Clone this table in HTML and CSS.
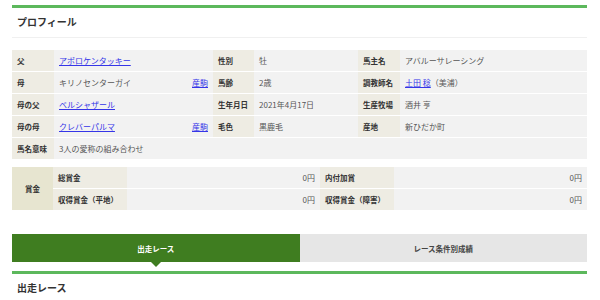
FILE: index.html
```html
<!DOCTYPE html>
<html lang="ja">
<head>
<meta charset="utf-8">
<link rel="stylesheet" href="styles.css">
</head>
<body>
<div class="wrap">
  <section class="section">
    <h2 class="sec-title">プロフィール</h2>
    <div class="prof">
      <div class="lb">父</div><div class="vl"><a href="#">アポロケンタッキー</a></div>
      <div class="lb">性別</div><div class="vl">牡</div>
      <div class="lb">馬主名</div><div class="vl">アバルーサレーシング</div>

      <div class="lb">母</div><div class="vl split"><span>キリノセンターガイ</span><a href="#">産駒</a></div>
      <div class="lb">馬齢</div><div class="vl">2歳</div>
      <div class="lb">調教師名</div><div class="vl"><a href="#">土田 稔</a>（美浦）</div>

      <div class="lb">母の父</div><div class="vl"><a href="#">ベルシャザール</a></div>
      <div class="lb">生年月日</div><div class="vl">2021年4月17日</div>
      <div class="lb">生産牧場</div><div class="vl">酒井 亨</div>

      <div class="lb">母の母</div><div class="vl split"><a href="#">クレバーパルマ</a><a href="#">産駒</a></div>
      <div class="lb">毛色</div><div class="vl">黒鹿毛</div>
      <div class="lb">産地</div><div class="vl">新ひだか町</div>

      <div class="lb">馬名意味</div><div class="vl full">3人の愛称の組み合わせ</div>
    </div>

    <div class="prize">
      <div class="pz-head">賞金</div>
      <div class="lb">総賞金</div><div class="vl num">0円</div>
      <div class="lb">内付加賞</div><div class="vl num">0円</div>
      <div class="lb">収得賞金（平地）</div><div class="vl num">0円</div>
      <div class="lb">収得賞金（障害）</div><div class="vl num">0円</div>
    </div>
  </section>

  <nav class="tabs">
    <div class="tab active">出走レース</div>
    <div class="tab">レース条件別成績</div>
  </nav>

  <section class="section section2">
    <h2 class="sec-title">出走レース</h2>
  </section>
</div>
</body>
</html>
```
FILE: styles.css
```css
* { box-sizing: border-box; }
html, body { margin: 0; padding: 0; background: #fff; }
body {
  font-family: "Noto Sans CJK JP", "Noto Sans", sans-serif;
  color: #555;
  font-size: 8px;
}
.wrap {
  width: 575px;
  margin: 0 12px;
  padding-top: 5px;
}
.section {
  border-top: 3px solid #5cb85c;
}
.sec-title {
  margin: 0;
  height: 30px;
  padding-left: 5px;
  font-size: 10px;
  line-height: 28px;
  font-weight: bold;
  color: #333;
  border-bottom: 1px solid #f0f0f0;
}
.prof {
  margin-top: 12px;
  display: grid;
  grid-template-columns: 42px 159px 41px 104px 42px 187px;
  grid-auto-rows: 21px;
  row-gap: 1px;
}
.lb {
  background: #eeece3;
  color: #333;
  font-weight: bold;
  font-size: 7.5px;
  padding-left: 5px;
  display: flex;
  align-items: center;
  white-space: nowrap;
}
.vl {
  background: #f2f2f2;
  padding: 0 5px;
  display: flex;
  align-items: center;
  white-space: nowrap;
}
.vl.full { grid-column: 2 / 7; }
.vl.split { justify-content: space-between; }
a { color: #3535e8; text-decoration: underline; }
.prize {
  margin-top: 8px;
  display: grid;
  grid-template-columns: 41px 74px 193px 74px 193px;
  grid-auto-rows: 21px;
  row-gap: 1px;
}
.pz-head {
  grid-row: 1 / 3;
  background: #e7e5d0;
  color: #333;
  font-weight: bold;
  font-size: 7.5px;
  display: flex;
  align-items: center;
  justify-content: center;
}
.vl.num { justify-content: flex-end; }
.tabs {
  margin-top: 24px;
  display: grid;
  grid-template-columns: 1fr 1fr;
  height: 28px;
}
.tab {
  background: #e6e6e6;
  color: #444;
  font-weight: bold;
  font-size: 7.5px;
  display: flex;
  align-items: center;
  justify-content: center;
  position: relative;
}
.tab.active {
  background: #3f7d20;
  color: #fff;
}
.tab.active::after {
  content: "";
  position: absolute;
  left: 50%;
  bottom: -5px;
  margin-left: -5px;
  border-left: 5px solid transparent;
  border-right: 5px solid transparent;
  border-top: 5px solid #3f7d20;
}
.section2 { margin-top: 9px; }
.section2 .sec-title { border-bottom: none; }
```
